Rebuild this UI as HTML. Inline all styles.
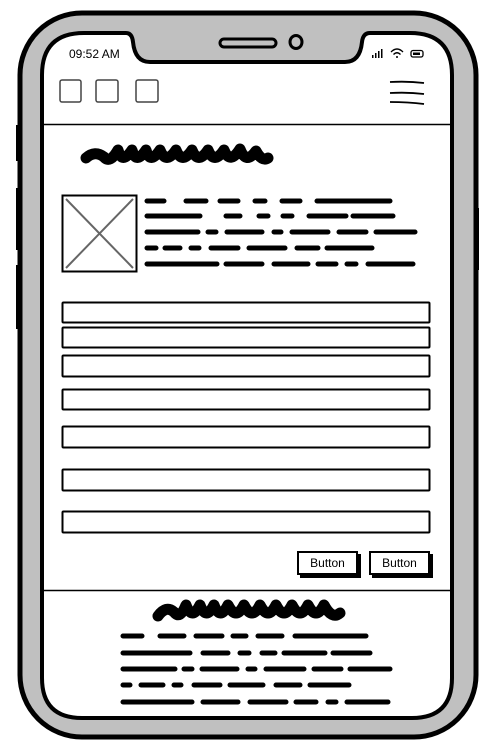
<!DOCTYPE html>
<html><head><style>
html,body{margin:0;padding:0;background:#fff;width:492px;height:747px;overflow:hidden;}
svg{position:absolute;left:0;top:0;}
.t{position:absolute;font-family:"Liberation Sans",sans-serif;color:#000;}
.btn{position:absolute;width:57px;height:20px;border:2px solid #000;background:#fff;box-shadow:3px 3px 0 #000;font:12px "Liberation Sans",sans-serif;text-align:center;line-height:20px;}
</style></head><body>
<svg width="492" height="747" viewBox="0 0 492 747">
 <rect x="16" y="125" width="6" height="36" fill="#000"/>
 <rect x="16" y="188" width="6" height="62" fill="#000"/>
 <rect x="16" y="265" width="6" height="64" fill="#000"/>
 <rect x="472" y="208" width="7" height="62" fill="#000"/>
 <rect x="20" y="13" width="456" height="724" rx="62" fill="#c0c0c0" stroke="#000" stroke-width="5"/>
 <path d="M42 75 Q42 33 84 33 L126 33 Q132 33 133 42 Q135 62 150 62 L345 62 Q360 62 362 42 Q363 33 370 33 L410 33 Q452 33 452 75 L452 678 Q452 718 412 718 L82 718 Q42 718 42 678 Z" fill="#fff" stroke="#000" stroke-width="4"/>
 <rect x="220" y="39" width="56" height="8" rx="4" fill="#c0c0c0" stroke="#000" stroke-width="3"/>
 <ellipse cx="296" cy="42" rx="6" ry="6.5" fill="#c0c0c0" stroke="#000" stroke-width="3"/>
 <rect x="372" y="55" width="1.5" height="3" fill="#000"/>
 <rect x="375" y="53" width="1.5" height="5" fill="#000"/>
 <rect x="378" y="51" width="1.5" height="7" fill="#000"/>
 <rect x="381" y="49" width="1.5" height="9" fill="#000"/>
 <path d="M391 52 Q397 46 403 52 M393.5 54.5 Q397 51 400.5 54.5" fill="none" stroke="#000" stroke-width="1.3"/>
 <circle cx="397" cy="57" r="1" fill="#000"/>
 <rect x="411" y="50.5" width="12" height="6.5" rx="2" fill="none" stroke="#000" stroke-width="1.3"/>
 <rect x="413" y="52.5" width="7" height="2.5" fill="#000"/>
 <rect x="60" y="80" width="21" height="22" rx="2" fill="none" stroke="#444" stroke-width="1.5"/>
 <rect x="96" y="80" width="22" height="22" rx="2" fill="none" stroke="#444" stroke-width="1.5"/>
 <rect x="136" y="80" width="22" height="22" rx="2" fill="none" stroke="#444" stroke-width="1.5"/>
 <path d="M390 82 Q408 81 424 83 M390 93 Q408 92 424 94 M390 102 Q408 102 424 104" stroke="#000" stroke-width="1.8" fill="none"/>
 <line x1="44" y1="124.5" x2="450" y2="124.5" stroke="#000" stroke-width="1.5"/>
 <path d="M86 158 Q95 150 104 157 Q110 164 118 150 Q122 165 132 150 Q136 165 146 150 Q150 165 160 150 Q166 165 176 150 Q182 165 192 150 Q198 165 208 150 Q214 165 224 150 Q230 165 240 149 Q246 165 256 151 Q262 162 268 158" fill="none" stroke="#000" stroke-width="11" stroke-linecap="round" stroke-linejoin="round"/>
 <rect x="62.5" y="195.5" width="74" height="76" fill="#fff" stroke="#000" stroke-width="2"/>
 <path d="M66 199 L133 268 M133 199 L66 268" stroke="#666" stroke-width="2"/>
 <g stroke="#000" stroke-width="5" stroke-linecap="round">
  <path d="M147 201 H164 M186 201 H206 M220 201 H238 M255 201 H265 M282 201 H300 M317 201 H390" />
  <path d="M147 216 H200 M226 216 H240 M259 216 H268 M283 216 H292 M309 216 H346 M353 216 H393" />
  <path d="M147 232 H198 M208 232 H216 M227 232 H262 M274 232 H281 M292 232 H328 M339 232 H366 M376 232 H415" />
  <path d="M147 248 H156 M165 248 H180 M191 248 H199 M211 248 H238 M249 248 H285 M297 248 H318 M327 248 H372" />
  <path d="M147 264 H217 M226 264 H262 M274 264 H308 M318 264 H336 M347 264 H356 M368 264 H413" />
 </g>
 <g fill="#fff" stroke="#000" stroke-width="2">
  <rect x="62.5" y="302.5" width="367" height="20" rx="1"/>
  <rect x="62.5" y="327.5" width="367" height="20" rx="1"/>
  <rect x="62.5" y="355.5" width="367" height="21" rx="1"/>
  <rect x="62.5" y="389.5" width="367" height="20" rx="1"/>
  <rect x="62.5" y="426.5" width="367" height="21" rx="1"/>
  <rect x="62.5" y="469.5" width="367" height="21" rx="1"/>
  <rect x="62.5" y="511.5" width="367" height="21" rx="1"/>
 </g>
 <line x1="44" y1="590.5" x2="450" y2="590.5" stroke="#000" stroke-width="1.5"/>
 <path d="M158 616 Q166 605 174 612 Q180 620 186 605 Q192 621 200 605 Q206 621 214 605 Q220 621 228 605 Q236 621 244 605 Q252 621 260 605 Q268 621 276 605 Q284 621 292 605 Q300 621 308 605 Q316 621 324 605 Q332 620 340 613" fill="none" stroke="#000" stroke-width="11" stroke-linecap="round" stroke-linejoin="round"/>
 <g stroke="#000" stroke-width="5" stroke-linecap="round">
  <path d="M123 636 H142 M160 636 H184 M196 636 H222 M233 636 H246 M258 636 H282 M295 636 H366" />
  <path d="M123 653 H190 M203 653 H228 M240 653 H249 M262 653 H275 M284 653 H325 M333 653 H370" />
  <path d="M123 669 H175 M184 669 H192 M202 669 H237 M248 669 H255 M266 669 H304 M314 669 H341 M350 669 H390" />
  <path d="M123 685 H130 M141 685 H163 M174 685 H181 M194 685 H220 M230 685 H263 M276 685 H300 M310 685 H349" />
  <path d="M123 702 H192 M203 702 H238 M250 702 H286 M296 702 H316 M328 702 H336 M347 702 H388" />
 </g>
</svg>
<div class="t" style="left:69px;top:47px;font-size:12px;">09:52 AM</div>
<div class="btn" style="left:297px;top:551px;">Button</div>
<div class="btn" style="left:369px;top:551px;">Button</div>
</body></html>
